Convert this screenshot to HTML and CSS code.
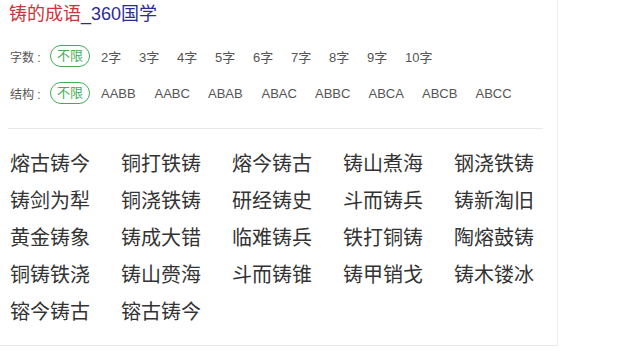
FILE: index.html
```html
<!DOCTYPE html>
<html lang="zh-CN">
  <head>
    <meta charset="UTF-8" />
    <title>铸的成语_360国学</title>
    <link rel="stylesheet" href="styles.css">
  </head>

  <body>
    <div class="Page">
      <div class="Main">
        <h1 class="title"><span class="red">铸的成语</span>_360国学</h1>

        <div class="filter first">
          <span class="label">字数 : </span>
          <span class="pill">不限</span>
          <ul class="opts nums">
            <li>2字</li>
            <li>3字</li>
            <li>4字</li>
            <li>5字</li>
            <li>6字</li>
            <li>7字</li>
            <li>8字</li>
            <li>9字</li>
            <li>10字</li>
          </ul>
        </div>

        <div class="filter">
          <span class="label">结构 : </span>
          <span class="pill">不限</span>
          <ul class="opts pattern">
            <li>AABB</li>
            <li>AABC</li>
            <li>ABAB</li>
            <li>ABAC</li>
            <li>ABBC</li>
            <li>ABCA</li>
            <li>ABCB</li>
            <li>ABCC</li>
          </ul>
        </div>

        <hr class="line" />

        <!-- idiom list -->
        <ul class="idioms">
          <li>熔古铸今</li>
          <li>铜打铁铸</li>
          <li>熔今铸古</li>
          <li>铸山煮海</li>
          <li>钢浇铁铸</li>
          <li>铸剑为犁</li>
          <li>铜浇铁铸</li>
          <li>研经铸史</li>
          <li>斗而铸兵</li>
          <li>铸新淘旧</li>
          <li>黄金铸象</li>
          <li>铸成大错</li>
          <li>临难铸兵</li>
          <li>铁打铜铸</li>
          <li>陶熔鼓铸</li>
          <li>铜铸铁浇</li>
          <li>铸山赍海</li>
          <li>斗而铸锥</li>
          <li>铸甲销戈</li>
          <li>铸木镂冰</li>
          <li>镕今铸古</li>
          <li>镕古铸今</li>
        </ul>
      </div>
    </div>
  </body>
</html>
```

FILE: styles.css
```css
body {
  margin: 0;
  background: #fff;
  font-family: "Liberation Sans", "Noto Sans CJK SC", sans-serif;
}

.Page {
  width: 557px;
  height: 345px;
  border-right: 1px solid #eee;
  border-bottom: 1px solid #e6e6e6;
}

.Main {
  padding: 0 15px 0 9px;
}

.title {
  margin: 0;
  padding-top: 2px;
  font-size: 18px;
  font-weight: normal;
  line-height: 24px;
  color: #2b2b98;
}

.title .red {
  color: #c9353a;
}

.filter {
  display: flex;
  align-items: center;
  height: 22px;
  margin-top: 15px;
  font-size: 13px;
  color: #555;
}

.filter.first {
  margin-top: 19px;
}

.label {
  margin-left: 1px;
  width: 40px;
  font-size: 12px;
  white-space: pre;
}

.pill {
  box-sizing: border-box;
  width: 40px;
  height: 22px;
  line-height: 20px;
  text-align: center;
  border: 1px solid #3fae57;
  border-radius: 11px;
  color: #3fae57;
}

.opts {
  display: flex;
  margin: 0;
  padding: 0 0 0 11px;
  list-style: none;
}

.nums li {
  width: 38px;
}

.pattern li {
  width: 53.5px;
}

.line {
  margin: 24px 0 0 -1px;
  width: 535px;
  border: none;
  border-top: 1px solid #e8e8e8;
}

.idioms {
  display: grid;
  grid-template-columns: repeat(5, 111px);
  margin: 0;
  padding: 17px 0 0 1px;
  list-style: none;
  font-size: 20px;
  line-height: 37px;
  color: #333;
}
```
